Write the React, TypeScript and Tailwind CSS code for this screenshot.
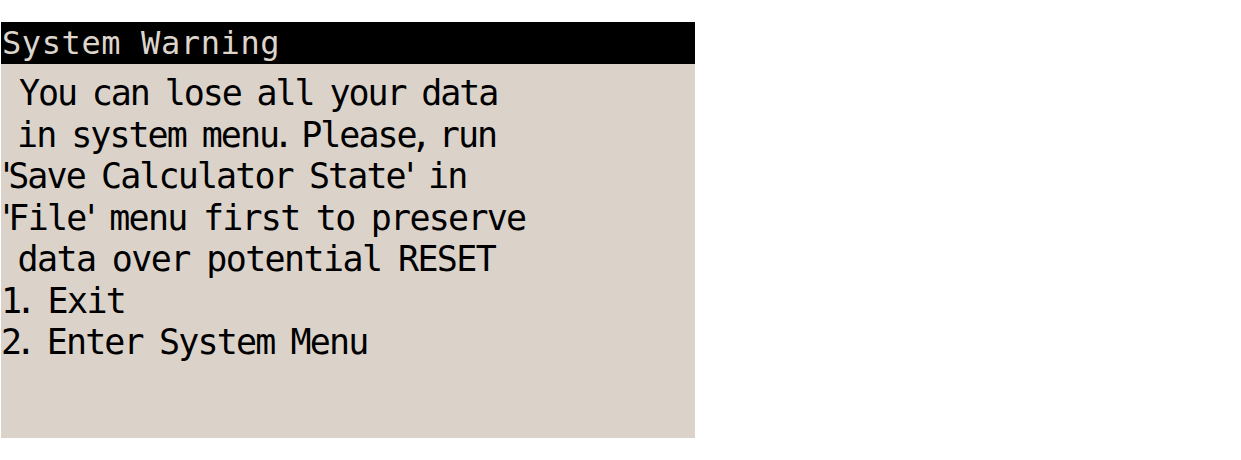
import React from "react";

const P = ({ c, r = "mr-[-7px]" }: { c: string; r?: string }) => (
  <span className={"ml-[-5px] " + r}>{c}</span>
);

export default function App() {
  return (
    <div className="w-full h-[460px] bg-white pt-[22px] pl-px">
      <div className="w-[694px] h-[416px] bg-[#dbd3ca] flex flex-col font-['DejaVu_Sans_Mono',monospace] text-black">
        <div className="h-[42px] bg-black text-[#ddd5cc] text-[32px] leading-[42px] tracking-[0.6px] pl-px whitespace-pre">
          System Warning
        </div>
        <div className="pt-[9px] text-[35px] leading-[41.5px] tracking-[-1.9px] [word-spacing:-3px] whitespace-pre">
          <div className="tracking-[-2.1px] pl-[2px]"> You can lose all your data</div>
          <div className="tracking-[-2px]">
            {" in system menu"}
            <P c="." />
            {" Please"}
            <P c="," />
            {" run"}
          </div>
          <div>
            <P c="'" />
            {"Save Calculator State"}
            <P c="'" />
            {" in"}
          </div>
          <div className="tracking-[-1.75px]">
            <P c="'" />
            {"File"}
            <P c="'" />
            {" menu first to preserve"}
          </div>
          <div className="tracking-[-1.6px]"> data over potential RESET</div>
          <div className="tracking-[-1.6px]">
            {"1"}
            <P c="." r="mr-[-4px]" />
            {" Exit"}
          </div>
          <div className="tracking-[-1.85px]">
            {"2"}
            <P c="." r="mr-[-4px]" />
            {" Enter System Menu"}
          </div>
        </div>
      </div>
    </div>
  );
}
